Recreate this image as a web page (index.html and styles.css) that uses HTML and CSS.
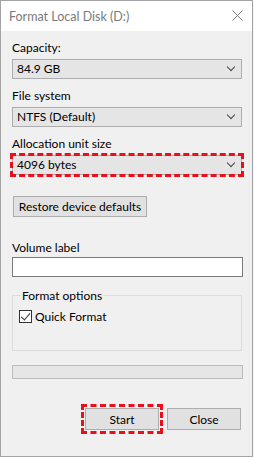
FILE: index.html
```html
<!DOCTYPE html>
<html lang="en">

<head>
    <meta charset="UTF-8">
    <meta name="viewport" content="width=device-width, initial-scale=1.0">
    <title>Format Local Disk (D:)</title>
    <link rel="stylesheet" href="styles.css">
</head>

<body>
    <div class="window">
        <div class="titlebar">
            <span class="title">Format Local Disk (D:)</span>
            <svg class="close-x" width="11" height="11" viewBox="0 0 11 11">
                <path d="M0.5 0.5L10.5 10.5M10.5 0.5L0.5 10.5" stroke="#7a7a7a" stroke-width="1" fill="none" />
            </svg>
        </div>
        <div class="content">
            <div class="field">
                <div class="label">Capacity:</div>
                <div class="select"><span>84.9 GB</span><i class="chev"></i></div>
            </div>
            <div class="field">
                <div class="label">File system</div>
                <div class="select"><span>NTFS (Default)</span><i class="chev"></i></div>
            </div>
            <div class="field">
                <div class="label">Allocation unit size</div>
                <div class="select marked"><span>4096 bytes</span><i class="chev"></i></div>
            </div>
            <button class="btn restore">Restore device defaults</button>
            <div class="label vol">Volume label</div>
            <div class="textbox"></div>
            <fieldset class="group">
                <legend>Format options</legend>
                <label class="check"><span class="box"></span>Quick Format</label>
            </fieldset>
            <div class="progress"></div>
            <div class="actions">
                <button class="btn marked-btn">Start</button>
                <button class="btn">Close</button>
            </div>
        </div>
    </div>
</body>

</html>
```

FILE: styles.css
```css
* {
    margin: 0;
    padding: 0;
    box-sizing: border-box;
}

body {
    background: #fff;
    font-family: Lato, "Noto Sans", sans-serif;
    font-size: 12px;
    color: #000;
}

.window {
    width: 253px;
    height: 457px;
    border: 1px solid #a3a3a3;
    background: #f0f0f0;
    box-shadow: 0 2px 3px rgba(0, 0, 0, 0.12);
}

.titlebar {
    height: 30px;
    background: #fff;
    display: flex;
    align-items: center;
    justify-content: space-between;
    padding: 0 9px 0 8px;
}

.title {
    color: #7a7a7a;
    font-size: 12.5px;
    line-height: 15px;
    margin-top: 1px;
}

.close-x {
    display: block;
    margin-top: -1px;
}

.content {
    padding: 9px 10px 0 11px;
}

.label {
    line-height: 15px;
    height: 15px;
}

.field {
    margin-bottom: 9px;
}

.field .label {
    margin-bottom: 4px;
}

.select {
    height: 20px;
    width: 230px;
    background: #e5e5e5;
    border: 1px solid #adadad;
    display: flex;
    align-items: center;
    justify-content: space-between;
    padding: 0 7px 0 4px;
    line-height: 18px;
}

.chev {
    width: 6px;
    height: 6px;
    border-right: 1px solid #444;
    border-bottom: 1px solid #444;
    transform: rotate(45deg);
    margin-top: -4px;
}

.marked {
    outline: 3px dashed #e8101a;
    outline-offset: -1px;
}

.btn {
    display: block;
    height: 21px;
    background: #e1e1e1;
    border: 1px solid #adadad;
    font-family: inherit;
    font-size: 12px;
    color: #000;
}

.restore {
    width: 134px;
    margin: 21px 0 0 1px;
}

.vol {
    margin-top: 23px;
}

.textbox {
    margin-top: 2px;
    width: 231px;
    height: 20px;
    background: #fff;
    border: 1px solid #7a7a7a;
}

.group {
    margin-top: 11px;
    width: 230px;
    height: 63px;
    border: 1px solid #dcdcdc;
    padding: 0 0 0 6px;
}

.group legend {
    margin-left: 2px;
    padding: 0 1px;
    line-height: 15px;
}

.check {
    display: flex;
    align-items: center;
    margin-top: 6px;
}

.box {
    width: 13px;
    height: 13px;
    border: 1px solid #333;
    background: #fff;
    margin-right: 3px;
    position: relative;
}

.box::after {
    content: "";
    position: absolute;
    left: 3px;
    top: 0px;
    width: 4px;
    height: 8px;
    border-right: 1px solid #333;
    border-bottom: 1px solid #333;
    transform: rotate(40deg);
}

.progress {
    margin-top: 14px;
    width: 231px;
    height: 14px;
    background: #e6e6e6;
    border: 1px solid #bcbcbc;
}

.actions {
    display: flex;
    justify-content: flex-end;
    gap: 8px;
    margin-top: 29px;
    padding-right: 1px;
}

.actions .btn {
    width: 74px;
    height: 22px;
}

.marked-btn {
    outline: 3px dashed #e8101a;
    outline-offset: 1px;
}
```
